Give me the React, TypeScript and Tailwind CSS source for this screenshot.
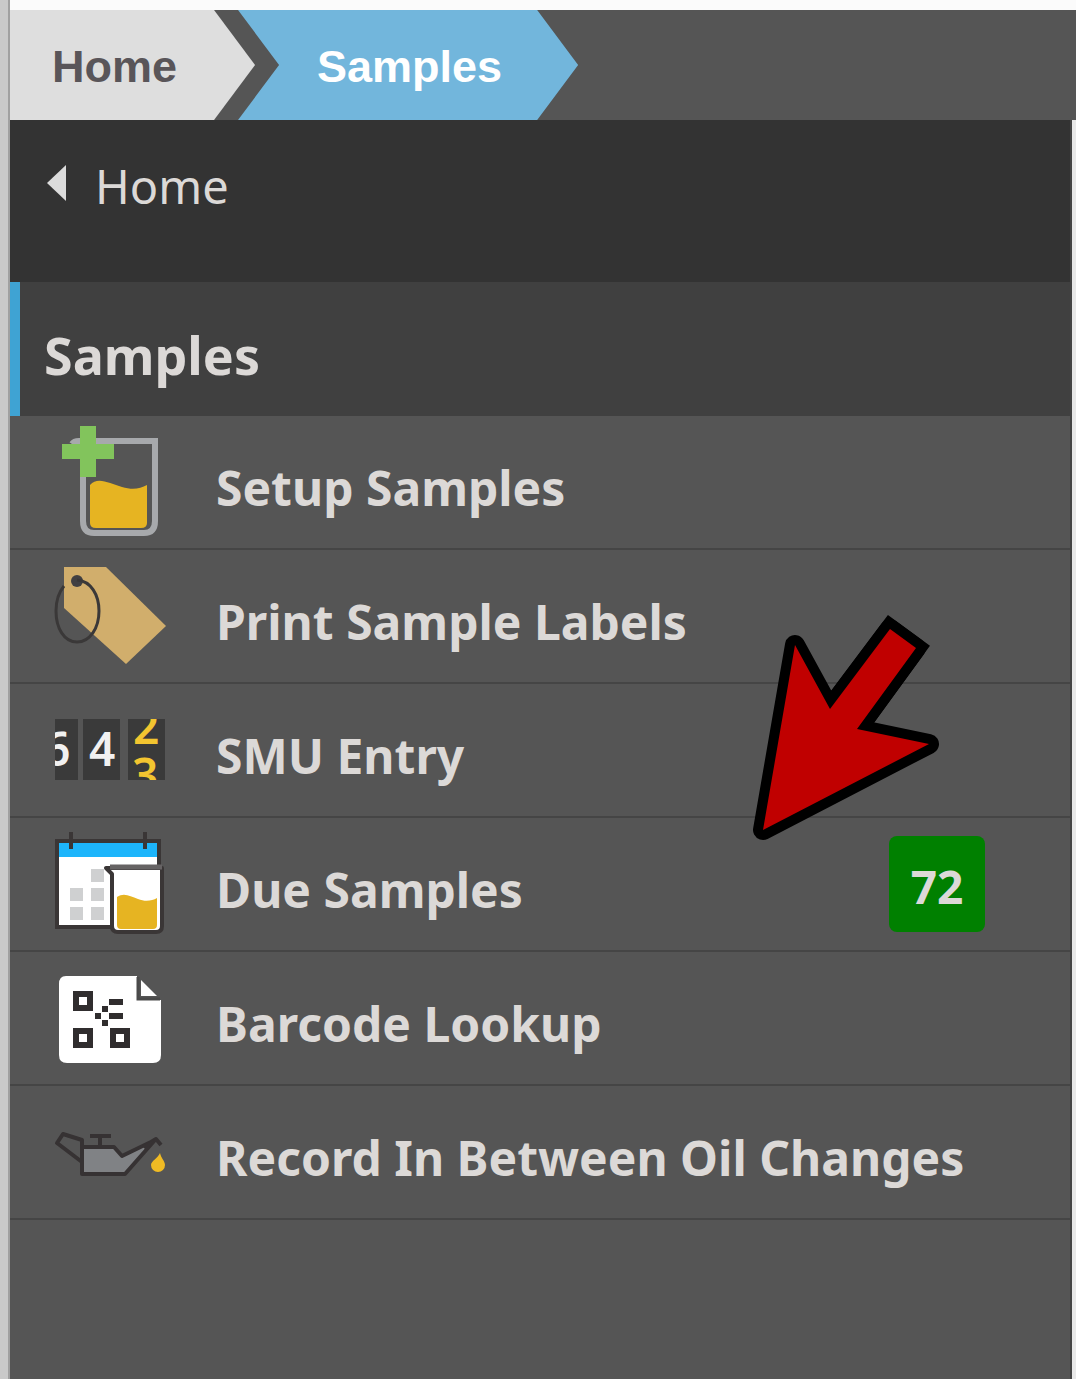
import type { ReactNode } from "react";

const SetupIcon = () => (
  <svg viewBox="0 0 112 112" className="size-28 shrink-0" aria-hidden="true">
    <path d="M18 18Q20 15 25 15H101V95Q101 107 90 107H40Q29 107 29 95V15" fill="none" stroke="#a7a9ac" strokeWidth="6" />
    <path d="M36 59C44 50 56 58 68 61C78 64 86 63 93 59V97Q93 102 87 102H42Q36 102 36 97Z" fill="#e6b422" />
    <path d="M26 0H42V18H60V33H42V51H26V33H8V18H26Z" fill="#82c45c" />
  </svg>
);

const TagIcon = () => (
  <svg viewBox="0 0 112 112" className="size-28 shrink-0" aria-hidden="true">
    <path d="M10 7H52L112 66L72 104L10 48Z" fill="#d1ae6c" />
    <circle cx="23" cy="21" r="6" fill="#414042" />
    <path d="M23 20C37 21 45 35 45 51C45 68 36 82 23 82C10 82 2 68 2 51C2 40 5 32 10 26" fill="none" stroke="#3a3838" strokeWidth="3" />
  </svg>
);

const CounterIcon = () => (
  <svg
    viewBox="0 0 112 112"
    className="size-28 shrink-0 font-['Noto_Sans',sans-serif] text-[46px] font-semibold"
    aria-hidden="true"
  >
    <svg x="1" y="25" width="23" height="61">
      <rect width="23" height="61" fill="#3a3a3a" />
      <text x="-11" y="47" fill="#f1f1f1">6</text>
    </svg>
    <svg x="29" y="25" width="37" height="61">
      <rect width="37" height="61" fill="#3a3a3a" />
      <text x="6" y="47" fill="#f1f1f1">4</text>
    </svg>
    <svg x="74" y="25" width="37" height="61">
      <rect width="37" height="61" fill="#3a3a3a" />
      <text x="5" y="25" fill="#f3c530">2</text>
      <text x="4" y="73" fill="#f3c530">3</text>
    </svg>
  </svg>
);

const DueIcon = () => (
  <svg viewBox="0 0 112 112" className="size-28 shrink-0" aria-hidden="true">
    <rect x="3" y="13" width="102" height="86" fill="#fff" stroke="#3a3636" strokeWidth="4" />
    <path d="M5 15H103V29H5Z" fill="#1db5fb" />
    <path d="M17 4V21M91 4V21" stroke="#3a3636" strokeWidth="4" />
    <path d="M37 41H50V54H37ZM16 60H29V73H16ZM37 60H50V73H37ZM16 79H29V92H16ZM37 79H50V92H37Z" fill="#cfd0d1" />
    <path d="M52 40H108V98Q108 104 102 104H64Q58 104 58 98V46Z" fill="#fff" stroke="#3a3636" strokeWidth="4" strokeLinejoin="round" />
    <path d="M56 39H108" stroke="#666364" strokeWidth="5" />
    <path d="M63 69C70 64 76 68 84 71C91 74 98 73 103 70V97Q103 101 99 101H67Q63 101 63 97Z" fill="#e6b422" />
  </svg>
);

const BarcodeIcon = () => (
  <svg viewBox="0 0 112 112" className="size-28 shrink-0" aria-hidden="true">
    <path d="M12 14H83V38H107V93Q107 101 99 101H13Q5 101 5 93V22Q5 14 12 14Z" fill="#fff" />
    <path d="M84 15V37H106" fill="none" stroke="#4a4a4a" strokeWidth="3" />
    <path d="M87 18L103 34H87Z" fill="#fff" />
    <path d="M22 32H36V46H22ZM22 69H36V83H22ZM59 69H73V83H59Z" fill="none" stroke="#302d2e" strokeWidth="6" />
    <path d="M41 51H47V57H41ZM48 44H54V50H48ZM48 58H54V64H48ZM55 37H69V43H55ZM55 51H69V57H55Z" fill="#302d2e" />
  </svg>
);

const OilIcon = () => (
  <svg viewBox="0 0 112 112" className="size-28 shrink-0" aria-hidden="true">
    <path d="M28 51H60L68 60L101 44L71 78H28Z" fill="#808285" />
    <path
      d="M28 51H60L68 60L101 44L71 78H28ZM28 51V44L9 38L3 47L28 66M36 40H57M46 40V51M97 46L102 43L107 49"
      fill="none"
      stroke="#363233"
      strokeWidth="4"
      strokeLinejoin="round"
    />
    <path d="M88 50L101 43L93 55Z" fill="#363233" />
    <path d="M106 57C107 62 111 65 111 69A7 7 0 0 1 97 69C97 65 104 62 106 57Z" fill="#f0bb24" />
  </svg>
);

const Arrow = () => (
  <svg viewBox="0 0 190 228" className="pointer-events-none absolute right-[129px] top-[494px] h-[228px] w-[190px]" aria-hidden="true">
    <path
      d="M12 216L44 31L79 95L139 15L165 34L106 115L178 130Z"
      fill="#000"
      stroke="#000"
      strokeWidth="20"
      strokeLinejoin="round"
    />
    <path d="M79 95L139 15L165 34L106 115" fill="none" stroke="#000" strokeWidth="20" />
    <path d="M12 216L44 31L79 95L139 15L165 34L106 115L178 130Z" fill="#c00000" />
  </svg>
);

const items: { label: string; icon: ReactNode; count?: number }[] = [
  { label: "Setup Samples", icon: <SetupIcon /> },
  { label: "Print Sample Labels", icon: <TagIcon /> },
  { label: "SMU Entry", icon: <CounterIcon /> },
  { label: "Due Samples", icon: <DueIcon />, count: 72 },
  { label: "Barcode Lookup", icon: <BarcodeIcon /> },
  { label: "Record In Between Oil Changes", icon: <OilIcon /> },
];

export default function App() {
  return (
    <div className="flex min-h-screen bg-[#e8e8e8] font-['Noto_Sans',sans-serif]">
      <div className="w-[10px] shrink-0 border-r-2 border-[#a0a0a0] bg-[#c9c9c9]" />

      <div className="flex min-w-0 flex-1 flex-col">
        <div className="h-[10px] bg-[#fbfbfb]" />

        {/* Breadcrumb */}
        <nav
          aria-label="Breadcrumb"
          className="flex h-[110px] bg-[#555] font-['Liberation_Sans',Arial,sans-serif] text-[45px] font-bold"
        >
          <a
            href="#home"
            className="flex items-center bg-[#dedede] pl-[42px] pr-[78px] pt-1 text-[#595559] [clip-path:polygon(0_0,calc(100%-41px)_0,100%_50%,calc(100%-41px)_100%,0_100%)]"
          >
            Home
          </a>
          <a
            href="#samples"
            aria-current="page"
            className="-ml-[17px] flex items-center bg-[#72b6dc] pl-[79px] pr-[76px] pt-1 text-white [clip-path:polygon(0_0,calc(100%-41px)_0,100%_50%,calc(100%-41px)_100%,0_100%,41px_50%)]"
          >
            Samples
          </a>
        </nav>

        {/* Side menu */}
        <nav aria-label="Samples" className="relative mr-1 flex-1 border-r-2 border-[#444] bg-[#555] text-[#dcd9d7]">
          <a href="#home" className="flex h-[162px] items-start bg-[#333] pl-9 pt-[34px] text-[47px] leading-[64px]">
            <svg viewBox="0 0 20 36" className="mr-[29px] mt-[11px] h-9 w-5" aria-hidden="true">
              <path d="M20 0V36L1 18Z" fill="#dcdcdc" />
            </svg>
            Home
          </a>

          <h1 className="flex h-[134px] items-center border-l-[10px] border-[#3fa3d3] bg-[#404040] pl-6 pt-3 text-[52px] font-bold">
            Samples
          </h1>

          <ul>
            {items.map((item) => (
              <li key={item.label}>
                <a href="#item" className="flex h-[134px] items-center border-b-2 border-[#454545] pl-11 pr-[85px]">
                  {item.icon}
                  <span className="ml-[50px] flex-1 whitespace-nowrap pt-[11px] text-[48px] font-bold">{item.label}</span>
                  {item.count && (
                    <span className="flex size-24 items-center justify-center rounded-lg bg-[#008000] pt-1 text-[46px] font-bold">
                      {item.count}
                    </span>
                  )}
                </a>
              </li>
            ))}
          </ul>

          <Arrow />
        </nav>
      </div>
    </div>
  );
}
